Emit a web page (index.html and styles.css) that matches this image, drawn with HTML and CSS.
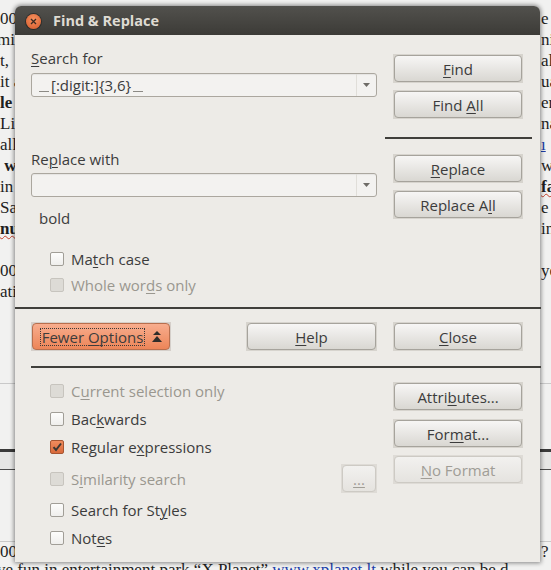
FILE: index.html
```html
<!DOCTYPE html>
<html>
<head>
<meta charset="utf-8">
<title>Find &amp; Replace</title>
<link rel="stylesheet" href="styles.css">
</head>
<body>
<div class="doc">
  <div class="dl"><span class="l">00</span><span class="r">e</span></div>
  <div class="dl"><span class="l shift">mi</span><span class="r">ni</span></div>
  <div class="dl"><span class="l">t,</span><span class="r">al</span></div>
  <div class="dl"><span class="l">it a</span><span class="r">ua</span></div>
  <div class="dl"><span class="l b">le</span><span class="r">er</span></div>
  <div class="dl"><span class="l">Lit</span><span class="r">na</span></div>
  <div class="dl"><span class="l">all</span><span class="r"><span class="lnk">ı</span></span></div>
  <div class="dl"><span class="l b">&nbsp;w</span><span class="r">wh</span></div>
  <div class="dl"><span class="l">in</span><span class="r b wavy">fa</span></div>
  <div class="dl"><span class="l">Sa</span><span class="r">e</span></div>
  <div class="dl"><span class="l b wavy">nu</span><span class="r">in</span></div>
  <div class="dl"></div>
  <div class="dl"><span class="l">00</span><span class="r">ye</span></div>
  <div class="dl"><span class="l">ati</span><span class="r"></span></div>
  <div class="rule-thin"></div>
  <div class="band"></div>
  <div class="rule-low"></div>
  <div class="dl short"><span class="l">00</span><span class="r">?</span></div>
  <div class="lastline">ve fun in entertainment park “X Planet” <span class="lnk">www.xplanet.lt</span> while you can be d</div>
</div>

<div class="dialog">
  <div class="titlebar">
    <div class="closebtn">
      <svg width="7" height="7" viewBox="0 0 7 7"><path d="M1 1L6 6M6 1L1 6" stroke="#3b2a22" stroke-width="1.3" fill="none"/></svg>
    </div>
    <div class="title-text">Find &amp; Replace</div>
  </div>

  <div class="dbody">
    <div class="grid">
      <div class="col">
        <div class="lbl lbl-search"><u>S</u>earch for</div>
        <div class="combo combo-search">
          <div class="ctext"><span class="ws"></span>[:digit:]{3,6}<span class="ws"></span></div>
          <div class="cdrop"><svg width="7" height="4" viewBox="0 0 7 4"><path d="M0 0H7L3.5 4Z" fill="#6e6c67"/></svg></div>
        </div>
        <div class="lbl lbl-replace">Re<u>p</u>lace with</div>
        <div class="combo combo-replace">
          <div class="ctext"></div>
          <div class="cdrop"><svg width="7" height="4" viewBox="0 0 7 4"><path d="M0 0H7L3.5 4Z" fill="#6e6c67"/></svg></div>
        </div>
        <div class="lbl note">bold</div>
        <div class="chk chk-first"><span class="box"></span><span>Ma<u>t</u>ch case</span></div>
        <div class="chk chk-next dis"><span class="box"></span><span>Whole wor<u>d</u>s only</span></div>
      </div>
      <div class="col">
        <div class="bw bw-find"><div class="btn"><span><u>F</u>ind</span></div></div>
        <div class="bw bw-next"><div class="btn"><span>Find <u>A</u>ll</span></div></div>
        <div class="rsep"></div>
        <div class="bw bw-replace"><div class="btn"><span><u>R</u>eplace</span></div></div>
        <div class="bw bw-next"><div class="btn"><span>Replace A<u>l</u>l</span></div></div>
      </div>
    </div>

    <div class="sep sep-full"></div>

    <div class="grid row-mid">
      <div class="midleft">
        <div class="bw bw-fewer accent"><div class="btn">
          <span class="focus">Fewer <u>O</u>ptions</span>
          <svg class="exp" width="10" height="11" viewBox="0 0 10 11"><path d="M5 0L9 4H1Z" fill="#2f2d2a"/><path d="M5 5L10 11H0Z" fill="#2f2d2a"/></svg>
        </div></div>
        <div class="bw bw-help"><div class="btn"><span><u>H</u>elp</span></div></div>
      </div>
      <div class="col">
        <div class="bw"><div class="btn"><span><u>C</u>lose</span></div></div>
      </div>
    </div>

    <div class="sep sep-inner"></div>

    <div class="grid">
      <div class="col">
        <div class="chk c-cur dis"><span class="box"></span><span>C<u>u</u>rrent selection only</span></div>
        <div class="chk c-std"><span class="box"></span><span>Bac<u>k</u>wards</span></div>
        <div class="chk c-std"><span class="box on"><svg width="12" height="12" viewBox="0 0 12 12"><path d="M2.5 6.2L5 9L10 2.5" stroke="#3a3834" stroke-width="2" fill="none"/></svg></span><span>Regular e<u>x</u>pressions</span></div>
        <div class="simrow">
          <div class="chk dis"><span class="box"></span><span>S<u>i</u>milarity search</span></div>
          <div class="bw bw-dots dis"><div class="btn"><span><u>...</u></span></div></div>
        </div>
        <div class="chk c-styles"><span class="box"></span><span>Search for St<u>y</u>les</span></div>
        <div class="chk c-std"><span class="box"></span><span>Not<u>e</u>s</span></div>
      </div>
      <div class="col">
        <div class="bw bw-attr"><div class="btn"><span>Attri<u>b</u>utes...</span></div></div>
        <div class="bw bw-fmt"><div class="btn"><span>For<u>m</u>at...</span></div></div>
        <div class="bw bw-nofmt dis"><div class="btn"><span><u>N</u>o Format</span></div></div>
      </div>
    </div>
  </div>
</div>
</body>
</html>
```

FILE: styles.css
```css
* { box-sizing: border-box; }
html, body { margin: 0; padding: 0; }
body {
  width: 551px;
  height: 570px;
  overflow: hidden;
  position: relative;
  background: #f1f1f0;
  font-family: "Liberation Serif", serif;
}

/* background document */
.doc { padding-top: 8px; font-size: 17px; color: #1e1e1e; }
.dl {
  display: flex;
  justify-content: space-between;
  height: 21px;
  line-height: 21px;
  white-space: nowrap;
}
.dl .l { display: block; }
.dl .r { display: block; width: 30px; margin-right: -20px; }
.dl .shift { margin-left: -3px; }
.b { font-weight: 700; }
.wavy { text-decoration: underline wavy #c4402a; text-decoration-thickness: 1px; }
.lnk { color: #1c3faa; text-decoration: underline; }
.rule-thin { margin-top: 81px; height: 1px; background: #c9c9c9; }
.band {
  margin-top: 65px;
  height: 21px;
  border-top: 3px solid #3a3a3a;
  border-bottom: 1px solid #4b4b4b;
  background: #e6e6e5;
}
.rule-low { margin-top: 71px; height: 1px; background: #c9c9c9; }
.dl.short { height: 17px; line-height: 19px; }
.lastline { white-space: nowrap; line-height: 21px; height: 21px; margin-left: -3px; }

/* dialog window */
.dialog {
  position: absolute;
  left: 15px;
  top: 6px;
  width: 525px;
  height: 556px;
  background: #edebe7;
  border-radius: 6px 6px 0 0;
  box-shadow: 0 0 4px 1px rgba(0, 0, 0, 0.45);
  font-family: "Open Sans", "DejaVu Sans", sans-serif;
  font-size: 15px;
  color: #3c3c3c;
  display: flex;
  flex-direction: column;
}
.titlebar {
  flex: none;
  height: 29px;
  display: flex;
  align-items: center;
  padding-left: 11px;
  background: linear-gradient(#52514d, #3c3b37);
  border-radius: 6px 6px 0 0;
}
.closebtn {
  width: 15px;
  height: 15px;
  margin-top: 2px;
  border-radius: 50%;
  background: radial-gradient(circle at 50% 35%, #f7915f, #d4592a);
  box-shadow: 0 0 0 1px rgba(0, 0, 0, 0.35);
  display: flex;
  align-items: center;
  justify-content: center;
}
.title-text {
  margin-left: 12px;
  font-weight: 700;
  font-size: 14.5px;
  color: #dfdbd2;
}

.dbody {
  flex: 1;
  padding: 0 8px 0 16px;
  display: flex;
  flex-direction: column;
}
.grid {
  display: grid;
  grid-template-columns: 346px 130px;
  column-gap: 16px;
}
.col { display: flex; flex-direction: column; }

u { text-decoration-thickness: 1px; text-underline-offset: 2px; }

.lbl { height: 18px; line-height: 17px; white-space: nowrap; }
.lbl-search { margin-top: 15px; }
.lbl-replace { margin-top: 52px; line-height: 20px; }
.note { margin-top: 11px; padding-left: 8px; line-height: 20px; }

.combo {
  height: 24px;
  border: 1px solid #aba79f;
  border-radius: 3px;
  background: #f3f2f0;
  display: flex;
  box-shadow: inset 0 1px 1px rgba(0, 0, 0, 0.06);
}
.combo-search { margin-top: 5px; }
.combo-replace { margin-top: 6px; }
.ctext {
  flex: 1;
  display: flex;
  align-items: center;
  padding-left: 5px;
  white-space: nowrap;
  color: #3c3c3c;
}
.ws {
  display: inline-block;
  width: 10px;
  height: 1px;
  background: #8c8a85;
  margin: 0 2px;
  position: relative;
  top: 6px;
}
.cdrop {
  width: 20px;
  border-left: 1px solid #e0ded9;
  display: flex;
  align-items: center;
  justify-content: center;
}

/* check boxes */
.chk {
  display: flex;
  align-items: center;
  gap: 7px;
  height: 18px;
  line-height: 18px;
  padding-left: 19px;
  white-space: nowrap;
}
.chk-first { margin-top: 24px; }
.chk-next { margin-top: 8px; }
.c-cur { margin-top: 14px; }
.c-std { margin-top: 10px; }
.c-styles { margin-top: 8px; }
.box {
  flex: none;
  width: 14px;
  height: 14px;
  border: 1px solid #a19e97;
  border-radius: 2px;
  background: linear-gradient(#fdfdfc, #efeeec);
  display: flex;
  align-items: center;
  justify-content: center;
}
.box.on {
  background: linear-gradient(#f08c5e, #d96a3b);
  border-color: #a65633;
}
.dis { color: #9a978f; }
.dis .box { background: #dddbd6; border-color: #c7c4be; }

.simrow {
  margin-top: 8px;
  height: 29px;
  display: flex;
  align-items: center;
  justify-content: space-between;
}

/* buttons */
.bw {
  width: 130px;
  height: 29px;
  padding: 1px;
  background: #d7d4ce;
}
.btn {
  height: 27px;
  border: 1px solid #a6a39c;
  border-radius: 4px;
  background: linear-gradient(#f7f6f5, #d9d7d2);
  display: flex;
  align-items: center;
  justify-content: center;
  white-space: nowrap;
  color: #3c3c3c;
}
.bw-find { margin-top: 19px; }
.bw-next { margin-top: 7px; }
.bw-replace { margin-top: 15px; }
.rsep {
  margin: 18px -9px 0 -8px;
  height: 2px;
  background: #403f3b;
}
.bw.dis { background: #dedbd6; }
.bw.dis .btn {
  background: linear-gradient(#f2f1ef, #e5e3df);
  border-color: #cdcac4;
  color: #a09d96;
}
.bw-attr { margin-top: 14px; }
.bw-fmt { margin-top: 8px; }
.bw-nofmt { margin-top: 7px; }
.bw-dots { width: 36px; }

.sep { height: 2px; background: #403f3b; }
.sep-full { margin: 13px -9px 0 -16px; }
.sep-inner { margin: 15px -9px 0 0; }

.row-mid { margin-top: 13px; }
.midleft { display: flex; justify-content: space-between; }
.bw-fewer { width: 140px; }
.bw-help { width: 131px; }
.bw.accent { background: #d5cfca; }
.accent .btn {
  background: linear-gradient(#f8ad8e, #ec8558);
  border-color: #b86f4e;
  gap: 7px;
}
.focus {
  border: 1px dotted #3a3a3a;
  padding: 0 1px;
  line-height: 16px;
}
.exp { flex: none; }
```
